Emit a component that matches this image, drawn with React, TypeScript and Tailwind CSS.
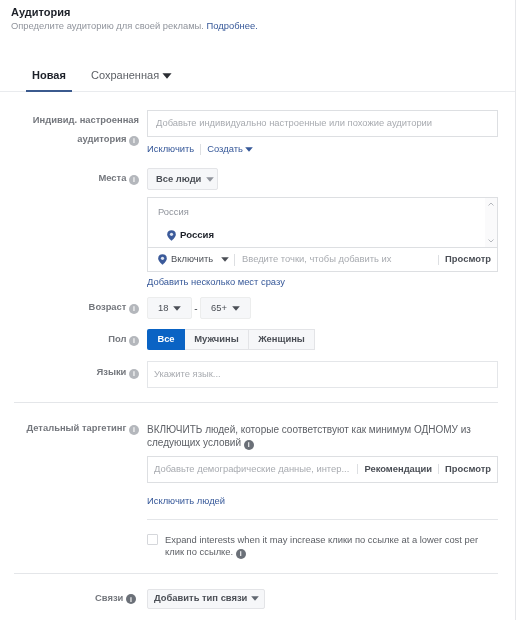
import React from "react";

const Info = ({ dark = false }: { dark?: boolean }) => (
  <span className={`inline-flex items-center justify-center w-[10px] h-[10px] rounded-full text-white text-[7px] font-bold leading-none align-[-1px] ${dark ? "bg-[#6b7078]" : "bg-[#b4b7bc]"}`}>i</span>
);

const Caret = ({ className = "text-[#4b4f56]", w = 4 }: { className?: string; w?: number }) => (
  <svg width={w * 2} height={w + 1} viewBox="0 0 8 5" className={`inline-block shrink-0 ${className}`}>
    <path d="M0.2 0.3 H7.8 L4 4.8 Z" fill="currentColor" />
  </svg>
);

const Pin = () => (
  <svg width="9" height="11" viewBox="0 0 9 11" className="shrink-0">
    <path d="M4.5 0.3 C7 0.3 8.8 1.5 8.8 4.5 C8.8 7 6 9.5 4.5 10.8 C3 9.5 0.2 7 0.2 4.5 C0.2 1.5 2 0.3 4.5 0.3 Z" fill="#3b5a9a" />
    <circle cx="4.5" cy="4.3" r="1.6" fill="#dfe5f1" />
  </svg>
);

const Row = ({ label, info, dark, top, className = "", children }: { label: React.ReactNode; info?: boolean; dark?: boolean; top: string; className?: string; children: React.ReactNode }) => (
  <div className={`flex ${className}`}>
    <div className={`w-[139px] shrink-0 text-right text-[9.4px] font-bold text-[#74777d] whitespace-nowrap ${top}`}>
      {label} {info && <Info dark={dark} />}
    </div>
    <div className="ml-2 w-[351px] shrink-0">{children}</div>
  </div>
);

const Btn = ({ children, className = "" }: { children: React.ReactNode; className?: string }) => (
  <div className={`flex items-center border border-[#e3e4e7] bg-[#f6f7f9] text-[9.4px] font-bold text-[#4b4f56] rounded-[2px] whitespace-nowrap ${className}`}>{children}</div>
);

export default function App() {
  return (
    <div className="w-[518px] h-[627px] bg-white overflow-hidden font-['Liberation_Sans',Arial,sans-serif] blur-[0.35px]">
      <div className="w-[516px] h-[620px] border-r border-[#e6e7ea]">
        <div className="pl-[11px] pt-[6px]">
          <div className="text-[11px] leading-[13px] font-bold text-[#1d2129]">Аудитория</div>
          <div className="text-[9.4px] leading-[13px] text-[#90949c]">
            Определите аудиторию для своей рекламы. <span className="text-[#365899]">Подробнее.</span>
          </div>
        </div>

        <div className="mt-[29px] h-[31px] flex items-start pl-[26px] border-b border-[#e9ebee]">
          <div className="w-[46px] h-[31px] border-b-2 border-[#3b5a8e] text-center text-[11px] leading-[13px] pt-[8px] font-bold text-[#1d2129]">Новая</div>
          <div className="ml-[19px] pt-[8px] text-[11px] leading-[13px] text-[#5d6066] flex items-center gap-[3px]">
            Сохраненная <Caret className="text-[#2b2e33]" w={5} />
          </div>
        </div>

        <div className="pt-[18px]">
          <Row label={<>Индивид. настроенная<br />аудитория</>} info top="leading-[19px]">
            <div className="h-[27px] border border-[#dddfe2] flex items-center pl-2 text-[9.4px] text-[#a8abb0]">
              Добавьте индивидуально настроенные или похожие аудитории
            </div>
            <div className="mt-[6px] h-[13px] flex items-center text-[9.4px] text-[#365899]">
              Исключить
              <span className="mx-[6px] h-[11px] border-l border-[#dddfe2]" />
              <span className="flex items-center gap-[2px]">Создать <Caret className="text-[#365899]" /></span>
            </div>
          </Row>

          <Row label="Места" info top="pt-[3px] leading-[14px]" className="mt-[12px]">
            <Btn className="w-[71px] h-[22px] pl-[8px] gap-[5px] text-[#4b4f56]">Все люди <Caret className="text-[#90949c]" /></Btn>
            <div className="mt-[7px] h-[75px] border border-[#dddfe2] flex flex-col">
              <div className="h-[50px] flex border-b border-[#dddfe2]">
                <div className="flex-1 pl-[10px] pt-[8px]">
                  <div className="text-[9.4px] leading-[12px] text-[#90949c]">Россия</div>
                  <div className="mt-[11px] ml-[9px] flex items-center gap-[4px] text-[9.6px] leading-[12px] font-bold text-[#1d2129]"><Pin />Россия</div>
                </div>
                <div className="w-[12px] bg-[#fafafb] flex flex-col justify-between items-center py-[4px] text-[#b5b8bd]">
                  <svg width="6" height="4" viewBox="0 0 6 4"><path d="M0.5 3.5 L3 1 L5.5 3.5" fill="none" stroke="currentColor" /></svg>
                  <svg width="6" height="4" viewBox="0 0 6 4"><path d="M0.5 0.5 L3 3 L5.5 0.5" fill="none" stroke="currentColor" /></svg>
                </div>
              </div>
              <div className="flex-1 flex items-center pl-[10px] pr-[6px] text-[9.4px] whitespace-nowrap">
                <Pin />
                <span className="ml-[4px] text-[#4b4f56] w-[50px]">Включить</span>
                <Caret className="text-[#4b4f56]" />
                <span className="ml-[5px] h-[12px] border-l border-[#dddfe2]" />
                <span className="ml-[7px] flex-1 text-[#a8abb0]">Введите точки, чтобы добавить их</span>
                <span className="h-[10px] border-l border-[#dddfe2] mr-[6px]" />
                <span className="font-bold text-[#4b4f56]">Просмотр</span>
              </div>
            </div>
            <div className="mt-[4px] text-[9.4px] leading-[12px] text-[#365899]">Добавить несколько мест сразу</div>
          </Row>

          <Row label="Возраст" info top="pt-[3px] leading-[14px]" className="mt-[9px]">
            <div className="flex items-center">
              <Btn className="w-[45px] h-[22px] pl-[10px] gap-[5px] font-normal border-[#eceded]">18 <Caret /></Btn>
              <span className="w-[8px] text-center text-[10px] text-[#4b4f56]">-</span>
              <Btn className="w-[51px] h-[22px] pl-[10px] gap-[5px] font-normal border-[#eceded]">65+ <Caret /></Btn>
            </div>
          </Row>

          <Row label="Пол" info top="pt-[3px] leading-[14px]" className="mt-[10px]">
            <div className="flex h-[21px] w-[168px]">
              <div className="w-[38px] bg-[#0a63c4] text-white text-[9.4px] font-bold flex items-center justify-center rounded-l-[2px]">Все</div>
              <Btn className="w-[64px] justify-center rounded-none border-l-0">Мужчины</Btn>
              <Btn className="w-[66px] justify-center rounded-none border-l-0">Женщины</Btn>
            </div>
          </Row>

          <Row label="Языки" info top="pt-[4px] leading-[14px]" className="mt-[11px]">
            <div className="h-[27px] border border-[#e4e6e9] flex items-center pl-[6px] text-[9.4px] text-[#a8abb0]">Укажите язык...</div>
          </Row>

          <div className="ml-[14px] w-[484px] mt-[14px] border-t border-[#e4e6e9]" />

          <Row label="Детальный таргетинг" info top="pt-[18px] leading-[14px]">
            <div className="pt-[20px] text-[10px] leading-[13px] text-[#5d6066] whitespace-nowrap">
              ВКЛЮЧИТЬ людей, которые соответствуют как минимум ОДНОМУ из<br />
              следующих условий <Info dark />
            </div>
            <div className="mt-[6px] h-[27px] border border-[#dddfe2] flex items-center pl-[6px] pr-[6px] text-[9.4px] whitespace-nowrap">
              <span className="flex-1 text-[#a8abb0]">Добавьте демографические данные, интер...</span>
              <span className="h-[10px] border-l border-[#dddfe2] mr-[6px]" />
              <span className="font-bold text-[#4b4f56]">Рекомендации</span>
              <span className="h-[10px] border-l border-[#dddfe2] mx-[6px]" />
              <span className="font-bold text-[#4b4f56]">Просмотр</span>
            </div>
            <div className="mt-[11px] text-[9.4px] leading-[13px] text-[#365899]">Исключить людей</div>
            <div className="mt-[12px] border-t border-[#e4e6e9]" />
            <div className="mt-[13px] flex">
              <div className="w-[11px] h-[11px] border border-[#d5d7db] rounded-[1px] mt-[1px] shrink-0" />
              <div className="ml-[7px] pt-[1px] text-[9.4px] leading-[12.5px] text-[#5d6066] whitespace-nowrap">
                Expand interests when it may increase клики по ссылке at a lower cost per<br />
                клик по ссылке. <Info dark />
              </div>
            </div>
          </Row>

          <div className="ml-[14px] w-[484px] mt-[14px] border-t border-[#e4e6e9]" />

          <Row label="Связи" info dark top="pt-[17px] leading-[14px] pr-[3px]">
            <Btn className="mt-[15px] w-[118px] h-[20px] pl-[6px] gap-[4px]">Добавить тип связи <Caret className="text-[#606770]" /></Btn>
          </Row>
        </div>
      </div>
    </div>
  );
}
